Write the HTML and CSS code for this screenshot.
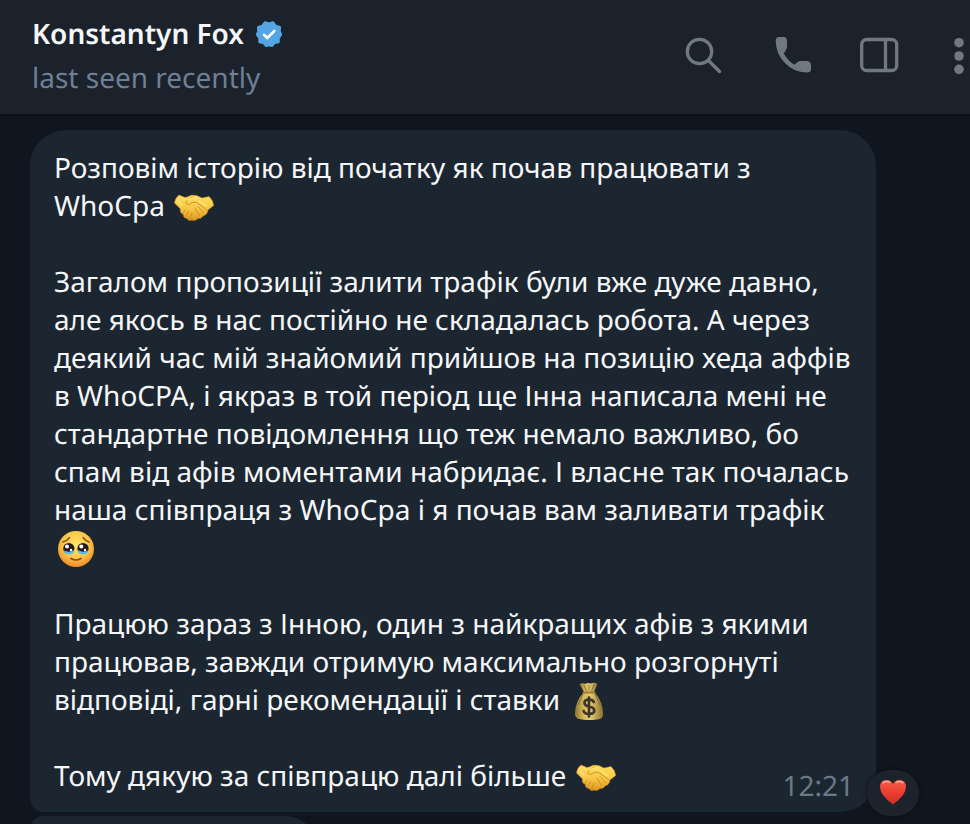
FILE: index.html
```html
<!DOCTYPE html>
<html lang="uk">
<head>
<meta charset="utf-8">
<meta name="viewport" content="width=device-width, initial-scale=1">
<title>Konstantyn Fox</title>
<link rel="stylesheet" href="styles.css">
</head>
<body>
<svg class="defs" aria-hidden="true">
  <defs>
    <linearGradient id="skin" x1="0" y1="0" x2="0" y2="1">
      <stop offset="0" stop-color="#ffdf62"/><stop offset=".55" stop-color="#f7c645"/><stop offset="1" stop-color="#dc9420"/>
    </linearGradient>
    <radialGradient id="face" cx=".5" cy=".38" r=".62">
      <stop offset="0" stop-color="#ffe36a"/><stop offset=".6" stop-color="#fcc64a"/><stop offset="1" stop-color="#ec8c2b"/>
    </radialGradient>
    <linearGradient id="sack" x1="0" y1="0" x2="1" y2="0">
      <stop offset="0" stop-color="#8d7433"/><stop offset=".3" stop-color="#d3b75d"/><stop offset=".55" stop-color="#e3ca73"/><stop offset="1" stop-color="#8b7030"/>
    </linearGradient>
    <linearGradient id="red" x1="0" y1="0" x2="0" y2="1">
      <stop offset="0" stop-color="#f4604c"/><stop offset=".4" stop-color="#ee4433"/><stop offset="1" stop-color="#cf2c22"/>
    </linearGradient>
    <symbol id="handshake" viewBox="0 0 40 38">
      <path fill="url(#skin)" stroke="#c98a22" stroke-width=".5" d="M5 7 L11 9.500 Q14 9 17 7.200 Q22 6.300 28 10 L35 8.500 Q39 12 39.700 17.500 L34 22 Q33.500 27 29 28 Q27.500 31 24 30.500 Q21 33.500 18 32 Q14.500 33.500 13 30.500 Q9 30 9.500 26.500 Q5.500 25 6.500 21 L0.500 15 Q1 10 5 7Z"/>
      <path fill="none" stroke="#c98a22" stroke-width=".9" stroke-linecap="round" d="M19 8.500 Q14 10 11.500 15 Q14 18 18 14.500 Q22 13 25 16 L33.500 22.500 M24 18.500 L30 25 M21 20 L25.500 27.500 M11 22 L8.500 26 M14.500 23.500 L11.500 29 M18 25.500 L15.500 31"/>
      <path fill="none" stroke="#ffe98a" stroke-width="1.200" stroke-linecap="round" d="M14 12 Q18 9 22 10 M25 13 L32 18 M4 13 L8 17"/>
    </symbol>
  </defs>
</svg>

<header class="topbar">
  <div class="contact">
    <h1 class="name">Konstantyn Fox
      <svg class="verified" viewBox="0 0 26 26" role="img" aria-label="Verified">
        <path fill="#53a5e3" stroke="#53a5e3" stroke-width="2.500" stroke-linejoin="round" d="M9 1.500 13 2.800 17 1.500 19.500 5 23.800 6.300 23.500 10.500 25 13.500 22.500 17 22.500 21 18.500 21.800 16 24.800 13 24 10 24.800 7.500 21.800 3.500 21 3.500 17 1 13.500 2.500 10.500 2.200 6.300 6.500 5Z"/>
        <path fill="none" stroke="#fff" stroke-width="2.600" stroke-linecap="round" stroke-linejoin="round" d="M8 13.800 11.300 17 18.300 10"/>
      </svg>
    </h1>
    <p class="status">last seen recently</p>
  </div>
  <nav class="actions" aria-label="Chat actions">
    <button class="action" type="button" aria-label="Search">
      <svg viewBox="0 0 40 40" fill="none" stroke="currentColor" stroke-width="3.300" stroke-linecap="round"><circle cx="14.500" cy="16.500" r="12.200"/><path d="M23.500 25.500 34.500 36.500"/></svg>
    </button>
    <button class="action" type="button" aria-label="Call">
      <svg viewBox="0 0 40 40" fill="currentColor"><path d="M6 2H10.500Q14 2 14 6V11.500Q14 14 10.700 18.500Q15 26 21.500 29.800Q25 26 27.500 26H34Q38 26.300 38 30.500V34Q38 37.500 34 37.500Q20 37 11.500 27.500Q3 18.500 2.700 6Q2.700 2 6 2Z"/></svg>
    </button>
    <button class="action" type="button" aria-label="Toggle side panel">
      <svg viewBox="0 0 40 40" fill="none" stroke="currentColor" stroke-width="3.300"><rect x="0.700" y="4.500" width="35" height="31" rx="5"/><path d="M24.500 5V36"/></svg>
    </button>
    <button class="action action-menu" type="button" aria-label="Menu">
      <svg viewBox="0 0 20 40" fill="currentColor"><circle cx="10" cy="7.700" r="4.800"/><circle cx="10" cy="21" r="4.800"/><circle cx="10" cy="34.300" r="4.800"/></svg>
    </button>
  </nav>
</header>

<main class="chat">
  <article class="bubble">
    <p>Розповім історію від початку як почав працювати з WhoCpa <svg class="emoji" role="img" aria-label="handshake"><use href="#handshake"/></svg></p>
    <p>Загалом пропозиції залити трафік були вже дуже давно, але якось в нас постійно не складалась робота. А через деякий час мій знайомий прийшов на позицію хеда аффів в WhoCPA, і якраз в той період ще Інна написала мені не стандартне повідомлення що теж немало важливо, бо спам від афів моментами набридає. І власне так почалась наша співпраця з WhoCpa і я почав вам заливати трафік
      <svg class="emoji" viewBox="0 0 40 38" role="img" aria-label="face holding back tears">
        <circle cx="20" cy="19" r="18" fill="url(#face)"/>
        <path d="M7 12Q11 11 13.500 7.500M27 7.500Q29.500 11 33 12" fill="none" stroke="#8b5418" stroke-width="1.500" stroke-linecap="round"/>
        <circle cx="12.800" cy="18.500" r="5.600" fill="#241a19"/><circle cx="27" cy="18.500" r="5.600" fill="#241a19"/>
        <path d="M8 20.500Q13 23 18 20Q18 24.500 13 24.500Q8.500 24.500 8 20.500ZM22 20Q27 23 32 20.500Q31.500 24.500 27 24.500Q22 24.500 22 20Z" fill="#5ebcf0"/>
        <g fill="#fff"><circle cx="11" cy="16.500" r="2"/><circle cx="15" cy="20" r="1.200"/><circle cx="25.300" cy="16.500" r="2"/><circle cx="29" cy="20" r="1.200"/></g>
        <path d="M15 28.500Q20 31.500 25 28.500" fill="none" stroke="#8b4a18" stroke-width="1.700" stroke-linecap="round"/>
      </svg></p>
    <p>Працюю зараз з Інною, один з найкращих афів з якими працював, завжди отримую максимально розгорнуті відповіді, гарні рекомендації і ставки
      <svg class="emoji" viewBox="0 0 40 38" role="img" aria-label="money bag">
        <path fill="url(#sack)" d="M15 10Q5.500 20 6 33Q6.500 37 13 37.500Q20 38.500 28 37.500Q34 37 34 33Q34.500 20 25 10Z"/>
        <path fill="url(#sack)" d="M10.500 2Q13 .5 16 1.800Q19 .5 21.500 1.500Q25 0 28.500 2L25 10H15Z"/>
        <path fill="none" stroke="#7c622b" stroke-width=".8" d="M15 3 17.500 9M20 3V9M25 3 22.500 9M14 12 9 23M26 12 31 23"/>
        <path fill="none" stroke="#a5782c" stroke-width="2" stroke-linecap="round" d="M14.500 10.500H25.500"/>
        <path fill="none" stroke="#3c3526" stroke-width="2.700" stroke-linecap="round" d="M24.800 20Q24 17.500 20 17.500Q15.500 17.500 15.500 20.800Q15.500 23.800 20 24.500Q25.300 25.500 25.300 28.700Q25 32 20 32Q15.500 32 14.700 29M20 15.500V34.500"/>
      </svg></p>
    <p>Тому дякую за співпрацю далі більше <svg class="emoji" role="img" aria-label="handshake"><use href="#handshake"/></svg></p>
    <time class="time">12:21</time>
    <button class="reaction" type="button" aria-label="Heart reaction">
      <svg viewBox="0 0 28 28"><path fill="url(#red)" d="M14 26.500Q8.500 23 4 17Q1 13 1 8.500Q1.300 2.200 7.500 2Q12 2 14 6Q16 2 20.500 2Q26.700 2.200 27 8.500Q27 13 24 17Q19.500 23 14 26.500Z"/><path fill="none" stroke="#ffc1b5" stroke-width="1.500" stroke-linecap="round" opacity=".75" d="M4 4.800Q7 2.500 10.500 4.300M17.500 4.300Q21 2.500 24 4.800"/></svg>
    </button>
  </article>
  <article class="bubble bubble-next" aria-label="Next message"></article>
</main>
</body>
</html>
```
FILE: styles.css
```css
* {
  box-sizing: border-box;
}

body {
  display: flex;
  flex-direction: column;
  height: 100vh;
  margin: 0;
  overflow: hidden;
  background: #0f161f;
  color: #f5f6f7;
  font-family: "Noto Sans", sans-serif;
  font-size: 28px;
  line-height: 38px;
  text-rendering: geometricPrecision;
}

h1,
p {
  margin: 0;
}

button {
  padding: 0;
  border: 0;
  background: none;
  color: inherit;
  cursor: pointer;
}

.defs {
  position: absolute;
  width: 0;
  height: 0;
}

.topbar {
  display: flex;
  flex-shrink: 0;
  justify-content: space-between;
  align-items: flex-start;
  padding: 12px 1px 14px 32px;
  border-bottom: 2px solid #0b1119;
  background: #1b222b;
}

.contact {
  display: flex;
  flex-direction: column;
}

.name {
  display: flex;
  align-items: center;
  gap: 12px;
  font-size: 28px;
  font-weight: 600;
  line-height: 44px;
}

.verified {
  width: 26px;
  height: 26px;
}

.status {
  color: #6f7f95;
  line-height: 44px;
}

.actions {
  display: flex;
  gap: 48px;
  padding-top: 23px;
  color: #707982;
}

.action {
  width: 40px;
  height: 40px;
}

.action-menu {
  width: 20px;
}

.action svg,
.reaction svg {
  display: block;
  width: 100%;
  height: 100%;
  overflow: visible;
}

.chat {
  display: flex;
  flex: 1;
  flex-direction: column;
  gap: 4px;
  min-height: 0;
  overflow: hidden;
  padding: 14px 50px 0 30px;
}

.bubble {
  position: relative;
  display: flex;
  flex-direction: column;
  flex-shrink: 0;
  gap: 38px;
  margin-right: 44px;
  padding: 19px 22px 17px 24px;
  border-radius: 36px 36px 36px 14px;
  background: #1c2631;
}

.emoji {
  width: 40px;
  height: 38px;
  margin-left: 2px;
  margin-block: -10px -6px;
  vertical-align: middle;
}

.time {
  position: absolute;
  right: 22px;
  bottom: 7px;
  color: #6d7987;
}

.reaction {
  position: absolute;
  right: -43px;
  bottom: -4px;
  width: 52px;
  height: 46px;
  padding: 8px 12px 10px;
  border-radius: 23px;
  background: #1c232c;
  box-shadow: 0 0 5px #0a1018;
}

.bubble-next {
  width: 290px;
  height: 80px;
  border-radius: 14px 36px 36px 14px;
}
```
